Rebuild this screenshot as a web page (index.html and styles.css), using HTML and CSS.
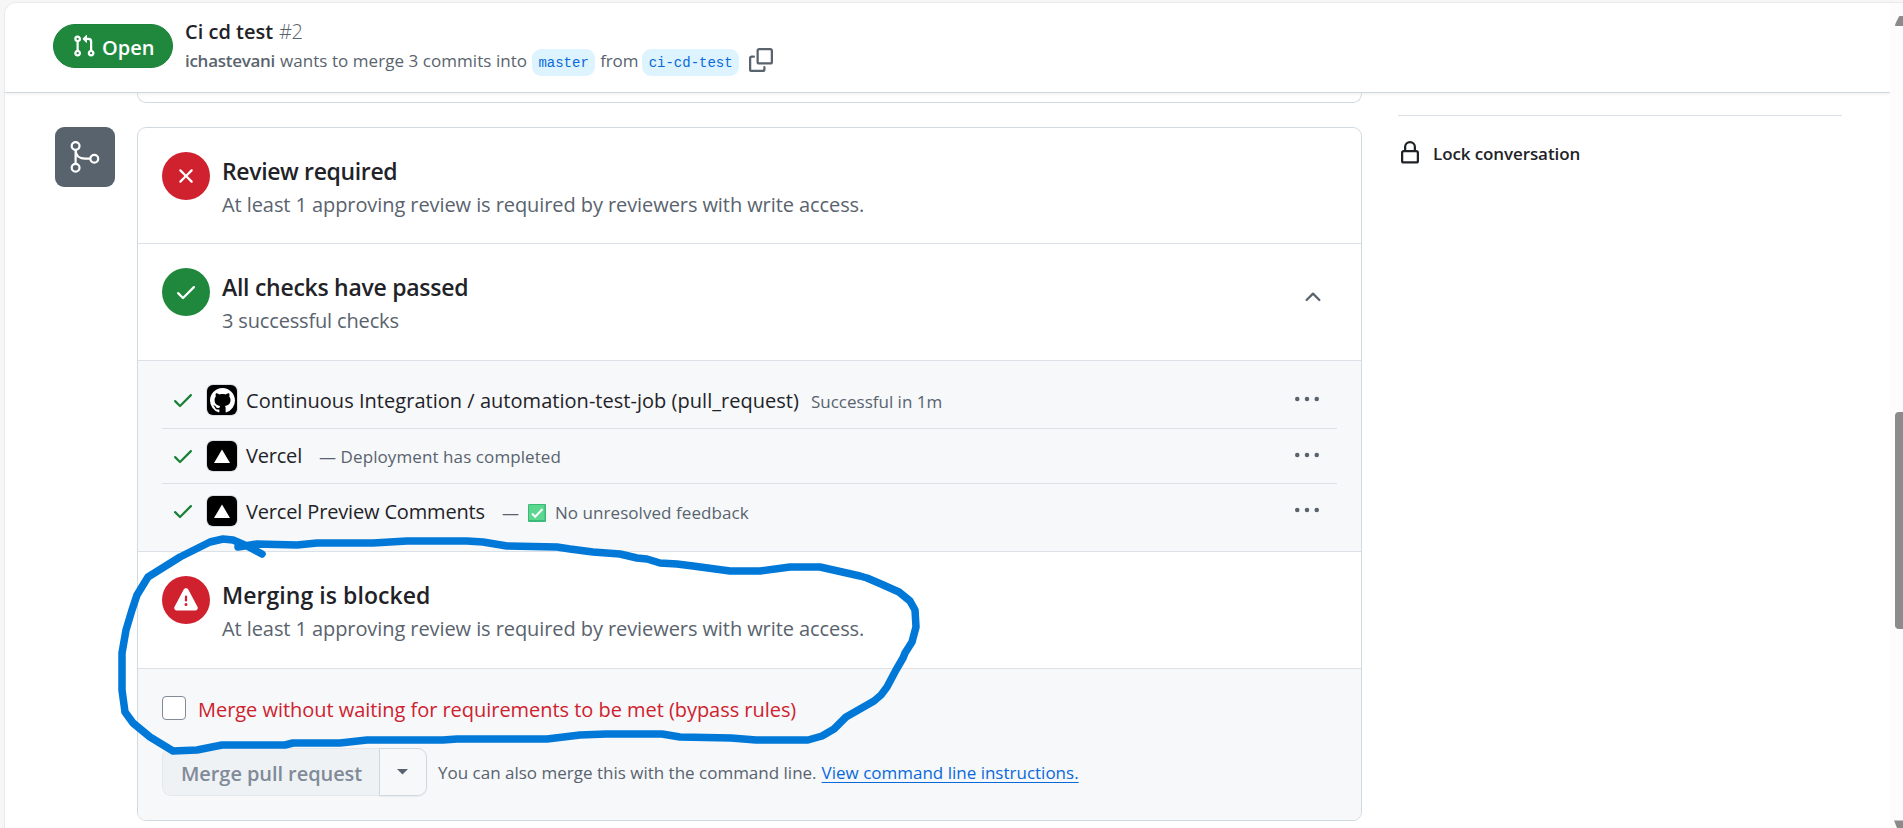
FILE: index.html
```html
<!DOCTYPE html>
<html lang="en">
<head>
<meta charset="utf-8">
<title>Ci cd test #2</title>
<link rel="stylesheet" href="styles.css">
</head>
<body>
<div class="window">
  <header class="pr-header">
    <span class="state">
      <svg class="icon" viewBox="0 0 16 16"><path d="M1.5 3.25a2.25 2.25 0 1 1 3 2.122v5.256a2.251 2.251 0 1 1-1.5 0V5.372A2.25 2.25 0 0 1 1.5 3.25Zm5.677-.177L9.573.677A.25.25 0 0 1 10 .854V2.5h1A2.5 2.5 0 0 1 13.5 5v5.628a2.251 2.251 0 1 1-1.5 0V5a1 1 0 0 0-1-1h-1v1.646a.25.25 0 0 1-.427.177L7.177 3.427a.25.25 0 0 1 0-.354ZM3.75 2.5a.75.75 0 1 0 0 1.5.75.75 0 0 0 0-1.5Zm0 9.5a.75.75 0 1 0 0 1.5.75.75 0 0 0 0-1.5Zm8.25.75a.75.75 0 1 0 1.5 0 .75.75 0 0 0-1.5 0Z"/></svg>
      <span class="state-text">Open</span>
    </span>
    <div class="pr-info">
      <div class="pr-title"><span class="title-text">Ci cd test</span><span class="number">#2</span></div>
      <div class="pr-meta">
        <span class="author">ichastevani</span>
        <span class="wants">wants to merge 3 commits into</span>
        <span class="branch">master</span>
        <span class="from">from</span>
        <span class="branch">ci-cd-test</span>
        <svg class="icon copy" viewBox="0 0 16 16"><path d="M0 6.75C0 5.784.784 5 1.75 5h1.5a.75.75 0 0 1 0 1.5h-1.5a.25.25 0 0 0-.25.25v7.5c0 .138.112.25.25.25h7.5a.25.25 0 0 0 .25-.25v-1.5a.75.75 0 0 1 1.5 0v1.5A1.75 1.75 0 0 1 9.25 16h-7.5A1.75 1.75 0 0 1 0 14.25Z"/><path d="M5 1.75C5 .784 5.784 0 6.75 0h7.5C15.216 0 16 .784 16 1.75v7.5A1.75 1.75 0 0 1 14.25 11h-7.5A1.75 1.75 0 0 1 5 9.25Zm1.75-.25a.25.25 0 0 0-.25.25v7.5c0 .138.112.25.25.25h7.5a.25.25 0 0 0 .25-.25v-7.5a.25.25 0 0 0-.25-.25Z"/></svg>
      </div>
    </div>
  </header>
  <div class="content">
    <main class="timeline">
      <div class="previous-box"></div>
      <div class="merge-row">
        <div class="badge">
          <svg viewBox="0 0 60 60" width="60" height="60" fill="none" stroke="#fff" stroke-width="2.2"><circle cx="20.6" cy="19" r="3.9"/><circle cx="20.6" cy="40.8" r="3.9"/><circle cx="39.3" cy="31.7" r="3.9"/><path d="M20.6 23v14M20.6 23c0 6 4.500 8.700 9.500 8.700h5.300"/></svg>
        </div>
        <section class="merge-box">
          <div class="status first">
            <span class="dot red"><svg class="icon" viewBox="0 0 16 16"><path d="M3.72 3.72a.75.75 0 0 1 1.06 0L8 6.94l3.22-3.22a.749.749 0 0 1 1.275.326.749.749 0 0 1-.215.734L9.06 8l3.22 3.22a.749.749 0 0 1-.326 1.275.749.749 0 0 1-.734-.215L8 9.06l-3.22 3.22a.751.751 0 0 1-1.042-.018.751.751 0 0 1-.018-1.042L6.94 8 3.72 4.78a.75.75 0 0 1 0-1.06Z"/></svg></span>
            <div class="status-text"><h3 class="h-review">Review required</h3><p class="p-review">At least 1 approving review is required by reviewers with write access.</p></div>
          </div>
          <div class="status">
            <span class="dot green"><svg class="icon" viewBox="0 0 16 16"><path d="M13.78 4.22a.75.75 0 0 1 0 1.06l-7.25 7.25a.75.75 0 0 1-1.06 0L2.22 9.28a.751.751 0 0 1 .018-1.042.751.751 0 0 1 1.042-.018L6 10.94l6.72-6.72a.75.75 0 0 1 1.06 0Z"/></svg></span>
            <div class="status-text"><h3 class="h-checks">All checks have passed</h3><p class="p-checks">3 successful checks</p></div>
            <svg class="icon chevron" viewBox="0 0 16 16"><path d="M3.22 10.530a.749.749 0 0 1 0-1.060l4.250-4.250a.749.749 0 0 1 1.060 0l4.250 4.250a.749.749 0 1 1-1.060 1.060L8 6.811 4.280 10.530a.749.749 0 0 1-1.060 0Z"/></svg>
          </div>
          <ul class="checks">
            <li class="check">
              <svg class="icon tick" viewBox="0 0 16 16"><path d="M13.78 4.22a.75.75 0 0 1 0 1.06l-7.25 7.25a.75.75 0 0 1-1.06 0L2.22 9.28a.751.751 0 0 1 .018-1.042.751.751 0 0 1 1.042-.018L6 10.94l6.72-6.72a.75.75 0 0 1 1.06 0Z"/></svg>
              <span class="app"><svg viewBox="0 0 16 16" width="25" height="25" fill="#fff"><path d="M8 0c4.42 0 8 3.58 8 8a8.013 8.013 0 0 1-5.45 7.59c-.4.08-.55-.17-.55-.38 0-.27.01-1.13.01-2.2 0-.75-.25-1.23-.54-1.48 1.78-.2 3.65-.88 3.65-3.95 0-.88-.31-1.59-.82-2.15.08-.2.36-1.02-.08-2.12 0 0-.67-.22-2.2.82-.64-.18-1.32-.27-2-.27-.68 0-1.36.09-2 .27-1.53-1.03-2.2-.82-2.2-.82-.44 1.1-.16 1.92-.08 2.12-.51.56-.82 1.28-.82 2.15 0 3.06 1.86 3.75 3.64 3.95-.23.2-.44.55-.51 1.07-.46.21-1.61.55-2.33-.66-.15-.24-.6-.83-1.23-.82-.67.01-.27.38.01.53.34.19.73.9.82 1.13.16.45.68 1.31 2.69.94 0 .67.01 1.3.01 1.49 0 .21-.15.45-.55.38A7.995 7.995 0 0 1 0 8c0-4.42 3.58-8 8-8Z"/></svg></span>
              <span class="name n-ci">Continuous Integration / automation-test-job (pull_request)</span>
              <span class="note o-ci">Successful in 1m</span>
              <svg class="icon more" viewBox="0 0 16 16"><circle cx="1.500" cy="8" r="1.500"/><circle cx="8" cy="8" r="1.500"/><circle cx="14.500" cy="8" r="1.500"/></svg>
            </li>
            <li class="check">
              <svg class="icon tick" viewBox="0 0 16 16"><path d="M13.78 4.22a.75.75 0 0 1 0 1.06l-7.25 7.25a.75.75 0 0 1-1.06 0L2.22 9.28a.751.751 0 0 1 .018-1.042.751.751 0 0 1 1.042-.018L6 10.94l6.72-6.72a.75.75 0 0 1 1.06 0Z"/></svg>
              <span class="app"><svg viewBox="0 0 30 30" width="30" height="30" fill="#fff"><path d="M15 8.500 23 22H7Z"/></svg></span>
              <span class="name n-vercel">Vercel</span>
              <span class="note o-vercel">— Deployment has completed</span>
              <svg class="icon more" viewBox="0 0 16 16"><circle cx="1.500" cy="8" r="1.500"/><circle cx="8" cy="8" r="1.500"/><circle cx="14.500" cy="8" r="1.500"/></svg>
            </li>
            <li class="check">
              <svg class="icon tick" viewBox="0 0 16 16"><path d="M13.78 4.22a.75.75 0 0 1 0 1.06l-7.25 7.25a.75.75 0 0 1-1.06 0L2.22 9.28a.751.751 0 0 1 .018-1.042.751.751 0 0 1 1.042-.018L6 10.94l6.72-6.72a.75.75 0 0 1 1.06 0Z"/></svg>
              <span class="app"><svg viewBox="0 0 30 30" width="30" height="30" fill="#fff"><path d="M15 8.500 23 22H7Z"/></svg></span>
              <span class="name n-preview">Vercel Preview Comments</span>
              <span class="note dash">—</span>
              <svg class="emoji" viewBox="0 0 18 18"><rect width="18" height="18" rx="1" fill="#3bb978"/><rect x="1" y="1" width="15.500" height="15" fill="#5bd78f"/><path d="M4 9.500 7.200 12.700 14.500 5" fill="none" stroke="#fff" stroke-width="2"/></svg>
              <span class="note o-preview">No unresolved feedback</span>
              <svg class="icon more" viewBox="0 0 16 16"><circle cx="1.500" cy="8" r="1.500"/><circle cx="8" cy="8" r="1.500"/><circle cx="14.500" cy="8" r="1.500"/></svg>
            </li>
          </ul>
          <div class="status">
            <span class="dot red"><svg class="icon" viewBox="0 0 16 16"><path d="M6.457 1.047c.659-1.234 2.427-1.234 3.086 0l6.082 11.378A1.750 1.750 0 0 1 14.082 15H1.918a1.750 1.750 0 0 1-1.543-2.575ZM9 11a1 1 0 1 0-2 0 1 1 0 0 0 2 0Zm-.250-5.250a.750.750 0 0 0-1.500 0v2.500a.750.750 0 0 0 1.500 0Z"/></svg></span>
            <div class="status-text"><h3 class="h-blocked">Merging is blocked</h3><p class="p-review">At least 1 approving review is required by reviewers with write access.</p></div>
          </div>
          <div class="actions">
            <label class="bypass"><span class="checkbox"></span><span class="bypass-text">Merge without waiting for requirements to be met (bypass rules)</span></label>
            <div class="merge-line">
              <div class="button-group">
                <span class="merge-button">Merge pull request</span>
                <span class="caret"><svg viewBox="0 0 12 6" width="11" height="5.500"><path d="M0 0h12L6 6Z" fill="#59636e"/></svg></span>
              </div>
              <span class="hint">You can also merge this with the command line.</span>
              <a class="link">View command line instructions.</a>
            </div>
          </div>
        </section>
      </div>
    </main>
    <aside class="sidebar">
      <div class="lock">
        <svg class="icon" viewBox="0 0 16 16"><path d="M4 4a4 4 0 0 1 8 0v2h.250c.966 0 1.750.784 1.750 1.750v5.500A1.750 1.750 0 0 1 12.250 15h-8.500A1.750 1.750 0 0 1 2 13.250v-5.500C2 6.784 2.784 6 3.750 6H4Zm8.250 3.500h-8.500a.250.250 0 0 0-.250.250v5.500c0 .138.112.250.250.250h8.500a.250.250 0 0 0 .250-.250v-5.500a.250.250 0 0 0-.250-.250ZM10.500 6V4a2.500 2.500 0 1 0-5 0v2Z"/></svg>
        <span class="lock-text">Lock conversation</span>
      </div>
    </aside>
  </div>
</div>
<div class="scrollbar">
  <svg viewBox="0 0 13 828" width="13" height="828" fill="#8b8b8b"><path d="M5 25.500c0-1 3-8 4.500-9.500H13v10H5.500Z"/><rect x="5" y="412" width="16" height="217" rx="4"/><path d="M4 820.500h9V828H7Z"/></svg>
</div>
<svg class="annotation" viewBox="0 0 1903 828" width="1903" height="828"><path d="M238 547 257 544 297 545 317 543 373 543 407 541 467 541 483 542 507 546 557 547 570 549 593 552 620 554 637 558 647 559 660 563 677 564 693 566 730 571 760 571 790 567 820 567 860 576 867 578 881 584 899 592 910 601 915 610 916 627 912 642 905 653 903 658 896 670 887 687 881 695 874 701 846 717 840 723 834 729 822 736 808 740 756 740 731 738 680 737 662 734 606 734 580 735 547 739 457 739 443 740 367 740 340 743 293 743 285 745 222 745 197 750 173 751 150 737 133 723 125 712 122 690 122 653 126 630 132 610 137 595 148 577 180 557 210 542 223 539 233 540 247 546 262 554"/></svg>
</body>
</html>
```
FILE: styles.css
```css
* { box-sizing: border-box; }
body { margin: 0; width: 1903px; height: 828px; overflow: hidden; background: #f6f6f6; color: #1f2328; font-family: "Open Sans", "Noto Sans", sans-serif; display: flex; padding: 2px 0 0 4px; }
h3, p, ul { margin: 0; padding: 0; }
span, a { white-space: nowrap; }
.icon { width: 24px; height: 24px; fill: currentColor; flex: none; display: block; }
.window { flex: 1; height: 830px; background: #fff; border: 1px solid #e9e9e9; border-right: 0; border-top-left-radius: 12px; overflow: hidden; }
.scrollbar { width: 13px; background: #fcfcfc; border-top: 1px solid #e9e9e9; }
.scrollbar svg { display: block; margin-top: -3px; }
.pr-header { display: flex; height: 90px; padding: 21px 0 0 48px; gap: 12px; border-bottom: 1px solid #d1d9e0; box-shadow: 0 1px 3px rgba(31, 35, 40, .08); }
.state { display: flex; width: 120px; height: 44px; align-items: center; gap: 6px; padding: 0 0 0 18px; border-radius: 22px; background: #1f883d; border: 1px solid #1c8139; color: #fff; font-size: 20px; font-weight: 600; }
.state-text { padding-top: 3px; }
.pr-info { margin-top: -6px; }
.pr-title { display: flex; gap: 6px; font-size: 20px; line-height: 28px; font-weight: 600; }
.number { font-weight: 300; color: #59636e; letter-spacing: -.5px; }
.pr-meta { display: flex; align-items: flex-start; margin-top: 1px; font-size: 17px; line-height: 28px; color: #59636e; }
.author { font-weight: 600; margin-right: 5px; letter-spacing: -.28px; }
.wants { letter-spacing: .05px; }
.from { letter-spacing: -.1px; }
.branch { margin: 2px 5px 0; padding: 0 6.300px; border-radius: 9px; background: #ddf4ff; color: #0969da; font: 14px/28px "Liberation Mono", monospace; height: 27px; }
.from + .branch { margin-left: 4px; }
.copy { margin: 1px 0 0 5px; }
.content { display: flex; }
.timeline { width: 1357px; }
.previous-box { margin-left: 132px; height: 10px; border: 1px solid #d1d9e0; border-top: 0; border-radius: 0 0 9px 9px; }
.merge-row { display: flex; gap: 22px; margin-top: 24px; padding-left: 50px; }
.badge { width: 60px; height: 60px; border-radius: 9px; background: #59636e; flex: none; }
.merge-box { width: 1225px; border: 1px solid #d1d9e0; border-radius: 9px; overflow: hidden; }
.status { display: flex; gap: 12px; height: 117px; padding: 24px; border-bottom: 1px solid #dce1e7; }
.status.first { height: 116px; }
.dot { width: 48px; height: 48px; border-radius: 50%; display: grid; place-items: center; color: #fff; flex: none; }
.red { background: #cf222e; }
.green { background: #1f883d; }
.status-text { margin-top: 2px; flex: 1; }
h3 { font-size: 23px; line-height: 34px; font-weight: 600; }
p { font-size: 20px; line-height: 34px; color: #59636e; }
.h-review { letter-spacing: -.36px; }
.h-checks { letter-spacing: -.27px; }
.h-blocked { letter-spacing: .06px; }
.p-review { letter-spacing: -.08px; }
.p-checks { letter-spacing: -.16px; }
.chevron { margin: 17px 12px 0 0; color: #59636e; }
.checks { list-style: none; background: #f6f8fa; padding: 12px 24px; border-bottom: 1px solid #dce1e7; }
.check { display: flex; height: 55px; padding-top: 12px; border-bottom: 1px solid #dce1e7; font-size: 20px; line-height: 30px; }
.check:first-child { height: 56px; }
.check:first-child .name, .check:last-child .name { line-height: 32px; }
.check:last-child { border: 0; }
.tick { color: #1a7f37; margin: 3px 12px 0 9px; }
.app { width: 30px; height: 30px; border-radius: 6px; background: #000; box-shadow: 0 0 0 1px #d9dde1; display: grid; place-items: center; margin-right: 9px; flex: none; }
.n-ci { letter-spacing: .03px; }
.n-vercel { letter-spacing: -.2px; }
.n-preview { letter-spacing: -.16px; }
.note { font-size: 17px; line-height: 33px; color: #59636e; }
.o-ci { margin-left: 12px; }
.o-vercel, .dash { margin-left: 17px; }
.o-vercel { letter-spacing: .09px; line-height: 31px; }
.o-preview { letter-spacing: .06px; }
.emoji { width: 18px; height: 18px; margin: 8px 9px 0 9px; }
.more { margin: 2px 18px 0 auto; color: #59636e; }
.actions { background: #f6f8fa; height: 151px; padding: 27px 24px 0; }
.bypass { display: flex; gap: 12px; height: 24px; color: #cf222e; font-size: 20px; line-height: 28px; letter-spacing: -.04px; }
.checkbox { width: 24px; height: 24px; border: 1px solid #818b98; border-radius: 4px; background: #fff; }
.merge-line { display: flex; align-items: center; margin-top: 28px; font-size: 17px; color: #59636e; }
.button-group { display: flex; height: 48px; width: 265px; margin-right: 11px; border-radius: 9px; }
.merge-button { width: 217px; padding-left: 18px; border: 1px solid #e4e8ed; border-right: 0; border-radius: 9px 0 0 9px; background: #eff2f5; color: #818b98; font-size: 20px; font-weight: 600; line-height: 49px; letter-spacing: -.07px; }
.caret { width: 48px; padding-right: 1px; border: 1px solid #d1d9e0; border-radius: 0 9px 9px 0; display: grid; place-items: center; box-shadow: 0 1px 1px rgba(31, 35, 40, .06); }
.link { margin-left: 5px; color: #0969da; text-decoration: underline; text-underline-offset: 3px; }
.sidebar { width: 444px; margin: 22px 0 0 36px; border-top: 1px solid #dce1e7; }
.lock { display: flex; gap: 11px; margin-top: 25px; font-size: 17px; line-height: 25px; font-weight: 600; letter-spacing: -.1px; }
.annotation { position: absolute; left: 0; top: 0; fill: none; stroke: #0078d7; stroke-width: 7.500; stroke-linecap: round; stroke-linejoin: round; }
```
